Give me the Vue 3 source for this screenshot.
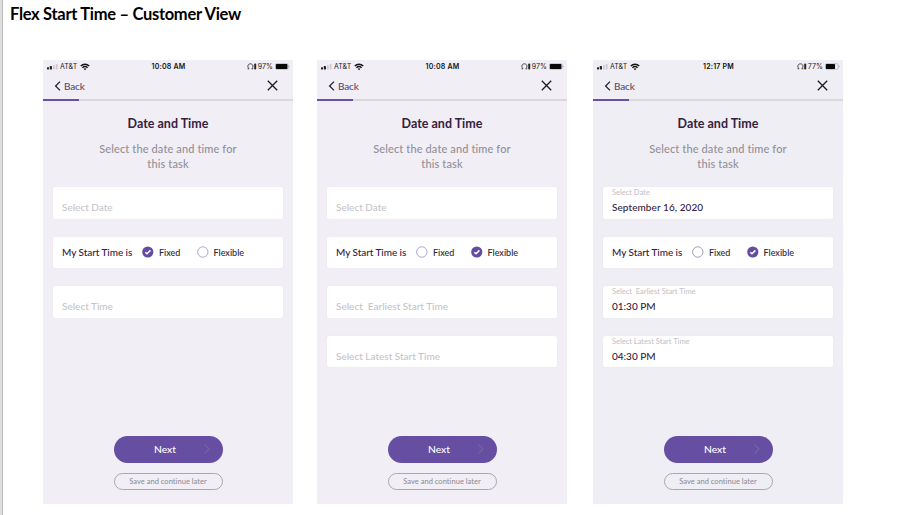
<script setup>
const screens = [
  {
    time: '10:08 AM', battery: 97, tone: 'lilac', choice: 'Fixed',
    date: { label: 'Select Date', value: '' },
    times: [{ label: 'Select Time', value: '' }],
  },
  {
    time: '10:08 AM', battery: 97, tone: 'lilac', choice: 'Flexible',
    date: { label: 'Select Date', value: '' },
    times: [
      { label: 'Select\u00a0 Earliest Start Time', value: '' },
      { label: 'Select Latest Start Time', value: '' },
    ],
  },
  {
    time: '12:17 PM', battery: 77, tone: 'grey', choice: 'Flexible',
    date: { label: 'Select Date', value: 'September 16, 2020' },
    times: [
      { label: 'Select\u00a0 Earliest Start Time', value: '01:30 PM' },
      { label: 'Select Latest Start Time', value: '04:30 PM' },
    ],
  },
]
const options = ['Fixed', 'Flexible']
</script>

<template>
  <div class="page">
    <h1 class="title">Flex Start Time – Customer View</h1>
    <div class="screens">
      <section v-for="(s, i) in screens" :key="i" class="phone" :class="s.tone">
        <div class="status">
          <div class="carrier">
            <svg class="signal" viewBox="0 0 11 6" width="11" height="6">
              <rect x="0" y="3.2" width="2" height="2.3" rx=".4" fill="#222" />
              <rect x="2.8" y="2" width="2.2" height="3.5" rx=".4" fill="#222" />
              <rect x="6" y="1" width="1.7" height="4.5" rx=".4" fill="#cbc9d0" />
              <rect x="8.8" y="0" width="1.7" height="5.5" rx=".4" fill="#cbc9d0" />
            </svg>
            <span class="net">AT&amp;T</span>
            <svg class="wifi" viewBox="0 0 10 8" width="10" height="8" fill="none" stroke="#161616">
              <path d="M.8 3C3.2.6 6.8.6 9.2 3" stroke-width="1.5" />
              <path d="M2.4 4.8C3.9 3.4 6.1 3.4 7.6 4.8" stroke-width="1.4" />
              <path d="M3.6 5.8Q5 4.8 6.4 5.8L5 7.3Z" fill="#161616" stroke="none" />
            </svg>
          </div>
          <span class="clock">{{ s.time }}</span>
          <div class="power">
            <svg viewBox="0 0 10 7" width="10" height="7" fill="none" stroke="#222">
              <path d="M1.7 5.6C-.1 3 1.3.8 3.4.8S6.9 3 5.1 5.6" stroke-width=".8" />
              <path d="M.6 5.8H2.2M4.6 5.8H6.2" stroke-width=".8" />
              <rect x="7.4" y=".8" width="1.6" height="5.4" rx=".4" fill="#222" stroke-width=".4" />
            </svg>
            <span class="pct">{{ s.battery }}%</span>
            <svg class="batt" viewBox="0 0 15 7" width="15" height="7">
              <rect x=".4" y=".7" width="12.8" height="5.6" rx="1.3" fill="none" stroke="#a3a1a8" stroke-width=".6" />
              <rect x=".9" y="1" :width="11.9 * s.battery / 100" height="5" rx=".8" fill="#080808" />
              <path d="M13.8 2.4Q15.2 3.5 13.8 4.6Z" fill="#8f8d94" />
            </svg>
          </div>
        </div>

        <div class="nav">
          <div class="back">
            <svg viewBox="0 0 7 10" width="7" height="10" fill="none" stroke="#27222d" stroke-width="1.3">
              <path d="M6 .6L1.6 5L6 9.4" />
            </svg>
            <span>Back</span>
          </div>
          <svg viewBox="0 0 11 11" width="11" height="11" stroke="#1d1b20" stroke-width="1.3">
            <path d="M.8.8L10.2 10.2M10.2.8L.8 10.2" />
          </svg>
        </div>
        <div class="progress"><div class="done"></div></div>

        <h2 class="heading">Date and Time</h2>
        <p class="sub">Select the date and time for<br />this task</p>

        <div class="form">
          <div class="field" :class="{ filled: s.date.value }">
            <span class="label">{{ s.date.label }}</span>
            <span v-if="s.date.value" class="value date">{{ s.date.value }}</span>
          </div>
          <div class="field choice">
            <span class="question">My Start Time is</span>
            <div v-for="o in options" :key="o" class="option" :class="o.toLowerCase()">
              <svg viewBox="0 0 12 12" width="12" height="12" fill="none">
                <template v-if="o === s.choice">
                  <circle cx="5.8" cy="6" r="5.6" fill="#644ca2" />
                  <path d="M3.3 6.2L5 7.8L8.4 4.4" stroke="#fff" stroke-width="1.5" />
                </template>
                <circle v-else class="ring" cx="5.8" cy="6" r="5.2" stroke-width=".9" />
              </svg>
              <span>{{ o }}</span>
            </div>
          </div>
          <div v-for="t in s.times" :key="t.label" class="field" :class="{ filled: t.value }">
            <span class="label">{{ t.label }}</span>
            <span v-if="t.value" class="value">{{ t.value }}</span>
          </div>
        </div>

        <div class="actions">
          <button class="next">
            <span>Next</span>
            <svg class="arrow" viewBox="0 0 6 10" width="6" height="10" fill="none" stroke="#76689b" stroke-width="1.1">
              <path d="M.6.6L5 5L.6 9.4" />
            </svg>
          </button>
          <button class="later">Save and continue later</button>
        </div>
      </section>
    </div>
  </div>
</template>

<style>
body { background: #fff; overflow: hidden; }
</style>

<style scoped>
.page {
  box-sizing: border-box;
  width: 914px;
  height: 515px;
  border-left: 2px solid #dedede;
  box-shadow: inset 1px 0 #bdbdbd;
  font-family: Lato, "Liberation Sans", sans-serif;
  font-variant-ligatures: none;
  font-weight: 500;
  color: #34213f;
}
.title {
  box-sizing: border-box;
  margin: 0;
  padding: 4px 0 0 8px;
  height: 60px;
  font-size: 16.5px;
  line-height: 20px;
  font-weight: 700;
  letter-spacing: -.3px;
  color: #000;
  white-space: nowrap;
}
.screens {
  display: grid;
  grid-template-columns: 274px 276px 250px;
  padding-left: 41px;
}
.phone {
  display: flex;
  flex-direction: column;
  width: 250px;
  height: 444px;
  background: #f1eef6;
}
.phone.grey { background: #efeef4; }
.status {
  display: grid;
  grid-template-columns: 1fr auto 1fr;
  align-items: center;
  height: 13px;
  padding: 0 3px 0 4px;
  font-family: Inter, "Liberation Sans", sans-serif;
  font-size: 7px;
  line-height: 13px;
  font-weight: 400;
  color: #222;
  white-space: nowrap;
}
.carrier, .power { display: flex; align-items: center; }
.net { margin: 0 3px 0 2px; }
.clock { font-weight: 600; letter-spacing: .2px; color: #111; }
.power { justify-content: flex-end; }
.pct { margin: 0 2px 0 1px; letter-spacing: .1px; }
.nav {
  display: flex;
  align-items: center;
  justify-content: space-between;
  height: 26px;
  padding: 0 15.5px 1px 11px;
  box-sizing: border-box;
}
.back { display: flex; align-items: center; gap: 3px; font-size: 10px; line-height: 12px; letter-spacing: -.15px; color: #5d4a69; }
.progress { height: 2px; background: #dad8dc; }
.done { width: 36px; height: 100%; background: #6750a6; }
.heading {
  margin: 15px 0 0;
  font-size: 12.5px;
  line-height: 16px;
  font-weight: 700;
  text-align: center;
}
.sub {
  margin: 9px 0 0;
  font-size: 11px;
  line-height: 15px;
  letter-spacing: .12px;
  color: #929097;
  text-align: center;
}
.form { display: flex; flex-direction: column; gap: 18px; padding: 16px 10px 0; }
.field {
  box-sizing: border-box;
  height: 31.5px;
  padding: 14px 9px 0;
  background: #fff;
  border-radius: 2px;
  box-shadow: 0 0 1px #dddae2;
  font-size: 10px;
  line-height: 13px;
  white-space: nowrap;
}
.label { display: block; color: #c6c4ca; }
.filled { padding-top: 0; }
.filled .label { font-size: 7.5px; line-height: 11px; letter-spacing: -.02px; }
.value { display: block; line-height: 13px; padding-top: 3px; }
.date { letter-spacing: .07px; }
.choice { display: flex; align-items: center; padding: 0 9px; }
.question { width: 80px; letter-spacing: -.06px; }
.option { display: flex; align-items: center; gap: 5px; font-size: 9px; color: #2b2730; }
.fixed { width: 54.5px; }
.ring { stroke: #a79bd0; }
.grey .ring { stroke: #9c94b5; }
.actions {
  display: flex;
  flex-direction: column;
  align-items: center;
  gap: 10px;
  margin-top: auto;
  padding-bottom: 14.5px;
}
.next, .later {
  box-sizing: border-box;
  width: 109px;
  padding: 0;
  font-family: inherit;
  font-weight: 500;
}
.next {
  display: grid;
  grid-template-columns: 1fr auto 1fr;
  align-items: center;
  height: 26.5px;
  padding: 0 13px 0 7px;
  border: 0;
  border-radius: 14px;
  background: #664ea3;
  color: #fff;
  font-size: 10.3px;
}
.next span { grid-column: 2; }
.arrow { justify-self: end; }
.later {
  height: 17px;
  border: 1px solid #aaa8ae;
  border-radius: 9px;
  background: transparent;
  color: #929097;
  font-size: 7.5px;
  line-height: 15px;
  letter-spacing: .03px;
}
</style>
